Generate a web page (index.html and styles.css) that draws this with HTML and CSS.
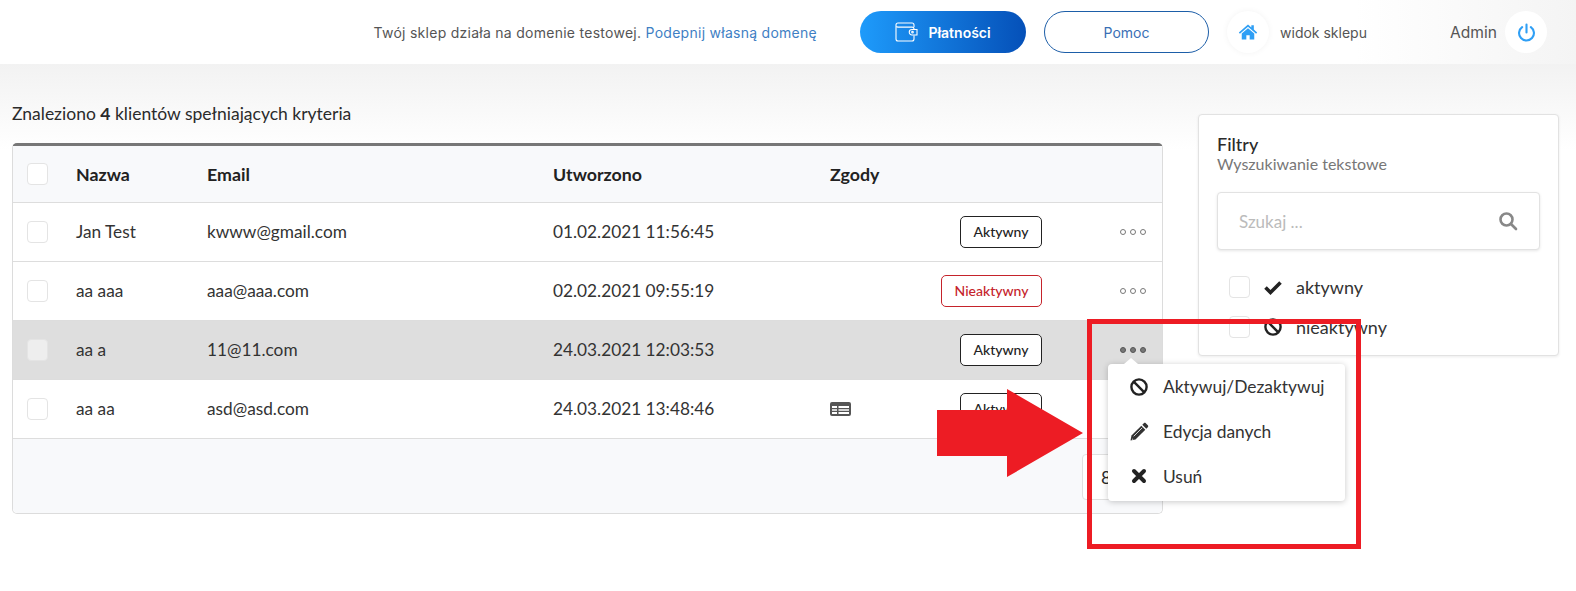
FILE: index.html
```html
<!DOCTYPE html>
<html lang="pl">
<head>
    <meta charset="UTF-8">
    <meta name="viewport" content="width=device-width, initial-scale=1.0">
    <title>Klienci</title>
    <link rel="stylesheet" href="styles.css">
</head>
<body>
    <header class="topbar">
        <p class="domain-note">Twój sklep działa na domenie testowej. <a href="#">Podepnij własną domenę</a></p>
        <a href="#" class="btn-pay">
            <svg class="wallet" viewBox="0 0 23 20" width="23" height="20" fill="none" stroke="#fff" stroke-width="1.100"><path d="M19 5V3c0-1.200-.8-2-2-2H3C1.800 1 1 1.800 1 3v14c0 1.200.8 2 2 2h14c1.200 0 2-.8 2-2v-3.500"/><path d="M1.300 4.500c.4.400 1 .6 1.700.6h14c1.200 0 2 .8 2 1.900"/><path d="M22 7.500h-5a2.500 2.500 0 0 0 0 5.500h5z"/><circle cx="17.500" cy="10.200" r=".8"/></svg>
            Płatności
        </a>
        <a href="#" class="btn-help">Pomoc</a>
        <a href="#" class="round-icon home-link">
            <svg viewBox="0 0 24 24" width="20" height="20" fill="#2f9ff5"><path d="M12 3 1 12.500l1.300 1.500L12 5.800 21.700 14l1.300-1.500-4-3.500V4h-3v2.500z"/><path d="M12 7.500 4.500 13.800V21h5.500v-5h4v5h5.500v-7.200z"/></svg>
        </a>
        <span class="shop-view">widok sklepu</span>
        <span class="admin-name">Admin</span>
        <a href="#" class="round-icon">
            <svg viewBox="0 0 24 24" width="21" height="21" fill="none" stroke="#2f9ff5" stroke-width="2.400" stroke-linecap="round"><path d="M12 3v9"/><path d="M7 5.800a8.500 8.500 0 1 0 10 0"/></svg>
        </a>
    </header>

    <main class="content">
        <section class="clients">
            <p class="found">Znaleziono <b>4</b> klientów spełniających kryteria</p>
            <div class="table-box">
                <table class="clients-table">
                    <thead>
                        <tr>
                            <th class="col-check"><input type="checkbox" class="check"></th>
                            <th class="col-name">Nazwa</th>
                            <th class="col-email">Email</th>
                            <th class="col-date">Utworzono</th>
                            <th class="col-consent">Zgody</th>
                            <th class="col-status"></th>
                            <th class="col-actions"></th>
                        </tr>
                    </thead>
                    <tbody>
                        <tr>
                            <td><input type="checkbox" class="check"></td>
                            <td>Jan Test</td>
                            <td>kwww@gmail.com</td>
                            <td>01.02.2021 11:56:45</td>
                            <td></td>
                            <td class="status"><span class="badge">Aktywny</span></td>
                            <td class="actions"><span class="dots"><i></i><i></i><i></i></span></td>
                        </tr>
                        <tr>
                            <td><input type="checkbox" class="check"></td>
                            <td>aa aaa</td>
                            <td>aaa@aaa.com</td>
                            <td>02.02.2021 09:55:19</td>
                            <td></td>
                            <td class="status"><span class="badge badge-off">Nieaktywny</span></td>
                            <td class="actions"><span class="dots"><i></i><i></i><i></i></span></td>
                        </tr>
                        <tr class="is-open">
                            <td><input type="checkbox" class="check"></td>
                            <td>aa a</td>
                            <td>11@11.com</td>
                            <td>24.03.2021 12:03:53</td>
                            <td></td>
                            <td class="status"><span class="badge">Aktywny</span></td>
                            <td class="actions">
                                <span class="dots"><i></i><i></i><i></i></span>
                                <ul class="row-menu">
                                    <li>
                                        <svg viewBox="0 0 20 20" width="20" height="20" fill="none" stroke="#222" stroke-width="2.400"><circle cx="10" cy="10" r="7.600"/><path d="M4.700 4.700l10.600 10.600"/></svg>
                                        Aktywuj/Dezaktywuj
                                    </li>
                                    <li>
                                        <svg viewBox="0 0 20 20" width="20" height="20" fill="#333"><path d="M1.500 18.500l1-5L12.300 3.700l4 4L6.500 17.500z"/><path d="M13.300 2.700l1.500-1.500c.6-.6 1.400-.6 2 0l2 2c.6.6.6 1.400 0 2l-1.500 1.500z"/><path d="M4.700 14.300l8.500-8.500M3 16.800l1.200 1" stroke="#fff" stroke-width=".8" fill="none"/></svg>
                                        Edycja danych
                                    </li>
                                    <li>
                                        <svg viewBox="0 0 20 20" width="20" height="20" fill="none" stroke="#222" stroke-width="4" stroke-linecap="round"><path d="M5 5l10 10M15 5L5 15"/></svg>
                                        Usuń
                                    </li>
                                </ul>
                            </td>
                        </tr>
                        <tr>
                            <td><input type="checkbox" class="check"></td>
                            <td>aa aa</td>
                            <td>asd@asd.com</td>
                            <td>24.03.2021 13:48:46</td>
                            <td>
                                <svg class="consent-icon" viewBox="0 0 21 14" width="21" height="14" fill="#555"><path d="M2 0h17a2 2 0 0 1 2 2v10a2 2 0 0 1-2 2H2a2 2 0 0 1-2-2V2a2 2 0 0 1 2-2zm0 4v2h5V4zm6.500 0v2H19V4zM2 7.200v1.600h5V7.200zm6.500 0v1.600H19V7.200zM2 10v2h5v-2zm6.500 0v2H19v-2z" fill-rule="evenodd"/></svg>
                            </td>
                            <td class="status"><span class="badge">Aktywny</span></td>
                            <td class="actions"></td>
                        </tr>
                    </tbody>
                </table>
                <div class="table-footer">
                    <div class="per-page">80</div>
                </div>
            </div>
        </section>

        <aside class="filters">
            <h2>Filtry</h2>
            <p class="filters-sub">Wyszukiwanie tekstowe</p>
            <div class="search">
                <input type="text" placeholder="Szukaj ...">
                <svg viewBox="0 0 20 20" width="20" height="20" fill="none" stroke="#888" stroke-width="2.600" stroke-linecap="round"><circle cx="8.500" cy="8.500" r="6"/><path d="M13 13l5 5"/></svg>
            </div>
            <label class="filter-row">
                <input type="checkbox" class="check">
                <svg viewBox="0 0 20 20" width="20" height="20" fill="none" stroke="#222" stroke-width="3.600"><path d="M2.500 10.500l5 5 10-10"/></svg>
                aktywny
            </label>
            <label class="filter-row">
                <input type="checkbox" class="check">
                <svg viewBox="0 0 20 20" width="20" height="20" fill="none" stroke="#222" stroke-width="2.400"><circle cx="10" cy="10" r="7.600"/><path d="M4.700 4.700l10.600 10.600"/></svg>
                nieaktywny
            </label>
        </aside>
    </main>

    <!-- annotation drawn over the screenshot -->
    <div class="mark-box"></div>
    <svg class="mark-arrow" viewBox="0 0 146 88" width="146" height="88" fill="#ed1c24"><path d="M0 21h70V0l76 44-76 44V67H0z"/></svg>
</body>
</html>
```

FILE: styles.css
```css
* {
    margin: 0;
    padding: 0;
    box-sizing: border-box;
}
body {
    font-family: 'Lato', sans-serif;
    color: #2b2b2b;
    background: #fff;
    min-height: 591px;
    position: relative;
    overflow: hidden;
}
a {
    text-decoration: none;
}
.topbar {
    height: 64px;
    background: linear-gradient(90deg, #fff 86%, #f4f4f4 100%);
    display: flex;
    align-items: center;
    justify-content: flex-end;
    padding: 0 29px 0 0;
    font-family: 'Inter', sans-serif;
    font-size: 14px;
    color: #555;
}
.domain-note {
    margin-right: 43px;
    letter-spacing: 0.27px;
}
.domain-note a {
    color: #3f7fc4;
}
.btn-pay {
    width: 166px;
    height: 42px;
    border-radius: 21px;
    background: linear-gradient(90deg, #1e9bfb 0%, #0550b8 100%);
    color: #fff;
    font-weight: 600;
    display: flex;
    align-items: center;
    justify-content: center;
    gap: 10px;
    margin-right: 18px;
}
.btn-help {
    width: 165px;
    height: 42px;
    border-radius: 21px;
    border: 1px solid #1d5ea8;
    color: #3a6fb5;
    display: flex;
    align-items: center;
    justify-content: center;
    margin-right: 18px;
}
.round-icon {
    width: 42px;
    height: 42px;
    border-radius: 50%;
    background: #fff;
    display: flex;
    align-items: center;
    justify-content: center;
}
.home-link {
    box-shadow: 0 0 6px rgba(0, 0, 0, 0.05);
}
.shop-view {
    margin-left: 11px;
    width: 88px;
    margin-right: 82px;
    white-space: nowrap;
}
.admin-name {
    margin-right: 8px;
    font-size: 15.600px;
}
.content {
    height: 527px;
    background: linear-gradient(180deg, #f2f2f2 0, #fff 86px);
    padding: 0 0 0 12px;
    display: flex;
    align-items: flex-start;
    gap: 35px;
}
.clients {
    width: 1151px;
}
.found {
    font-size: 17.500px;
    line-height: 22px;
    margin-top: 39px;
    margin-bottom: 18px;
    color: #2b2b2b;
}
.found b {
    font-weight: 700;
}
.table-box {
    border: 1px solid #dcdcdc;
    border-top: 3px solid #777;
    border-radius: 5px;
    background: #fff;
}
.clients-table {
    width: 100%;
    border-collapse: collapse;
    table-layout: fixed;
    font-size: 17.250px;
}
.clients-table th {
    height: 56px;
    background: #f8f9fb;
    text-align: left;
    font-weight: 700;
    font-size: 17.800px;
    color: #222;
    border-bottom: 1px solid #ddd;
}
.clients-table td {
    height: 59px;
    border-bottom: 1px solid #ddd;
    color: #333;
}
.col-check {
    width: 63px;
}
.col-name {
    width: 131px;
}
.col-email {
    width: 346px;
}
.col-date {
    width: 277px;
}
.col-consent {
    width: 100px;
}
.col-actions {
    width: 120px;
}
.clients-table th:first-child,
.clients-table td:first-child {
    padding-left: 14px;
}
.check {
    appearance: none;
    display: block;
    width: 21px;
    height: 22px;
    background: #fff;
    border: 1px solid #e4e4e4;
    border-radius: 4px;
}
.is-open td {
    background: #dedede;
}
.is-open .check {
    background: #eee;
}
.status {
    text-align: right;
}
.badge {
    display: inline-block;
    height: 32px;
    line-height: 30px;
    padding: 0 12.500px;
    font-size: 14px;
    font-weight: 500;
    color: #222;
    background: #fff;
    border: 1px solid #222;
    border-radius: 5px;
    vertical-align: middle;
}
.badge-off {
    color: #c5232b;
    border-color: #c5232b;
}
.clients-table td.actions {
    position: relative;
    padding-right: 16px;
}
.dots {
    display: flex;
    justify-content: flex-end;
    gap: 4px;
}
.dots i {
    width: 6px;
    height: 6px;
    border-radius: 50%;
    border: 1px solid #777;
}
.is-open .dots i {
    background: #777;
    border-color: #555;
}
.consent-icon {
    display: block;
}
.table-footer {
    height: 74px;
    background: #f8f9fb;
    border-radius: 0 0 5px 5px;
    padding: 15px 14px 0 0;
    display: flex;
    justify-content: flex-end;
}
.per-page {
    width: 66px;
    height: 46px;
    padding-left: 18px;
    line-height: 44px;
    font-size: 18px;
    background: #fff;
    border: 1px solid #e0e0e0;
    border-radius: 4px;
}
.row-menu {
    position: absolute;
    left: 66px;
    top: 43px;
    width: 237px;
    height: 137px;
    list-style: none;
    background: #fff;
    border-radius: 4px;
    box-shadow: 0 1px 6px rgba(0, 0, 0, 0.22);
    padding-top: 1px;
    z-index: 2;
}
.row-menu::before {
    content: "";
    position: absolute;
    left: 16px;
    top: -6px;
    border-left: 7px solid transparent;
    border-right: 7px solid transparent;
    border-bottom: 6px solid #fff;
}
.row-menu li {
    height: 44.800px;
    display: flex;
    align-items: center;
    gap: 14px;
    padding-left: 21px;
    font-size: 17.400px;
    color: #333;
    white-space: nowrap;
}
.filters {
    width: 361px;
    height: 242px;
    margin-top: 50px;
    padding: 19px 18px 0;
    background: #fff;
    border: 1px solid #e2e2e2;
    border-radius: 4px;
    box-shadow: 0 1px 3px rgba(0, 0, 0, 0.08);
}
.filters h2 {
    font-size: 18px;
    line-height: 20px;
    font-weight: 500;
    color: #2b2b2b;
}
.filters-sub {
    font-size: 16px;
    line-height: 20px;
    color: #777;
}
.search {
    margin-top: 18px;
    height: 58px;
    display: flex;
    align-items: center;
    padding: 0 21px;
    background: #fff;
    border: 1px solid #e2e2e2;
    border-radius: 4px;
    box-shadow: 0 1px 3px rgba(0, 0, 0, 0.1);
}
.search input {
    flex: 1;
    border: none;
    outline: none;
    font-family: 'Lato', sans-serif;
    font-size: 17px;
    background: transparent;
}
.search input::placeholder {
    color: #bbb;
}
.filter-row {
    display: flex;
    align-items: center;
    gap: 13px;
    height: 40px;
    padding-left: 12px;
    font-size: 18px;
    color: #333;
}
.search + .filter-row {
    margin-top: 17px;
}
.mark-box {
    position: absolute;
    left: 1087px;
    top: 319px;
    width: 274px;
    height: 230px;
    border: 5px solid #ed1c24;
    z-index: 3;
}
.mark-arrow {
    position: absolute;
    left: 937px;
    top: 389px;
    z-index: 3;
}
```
